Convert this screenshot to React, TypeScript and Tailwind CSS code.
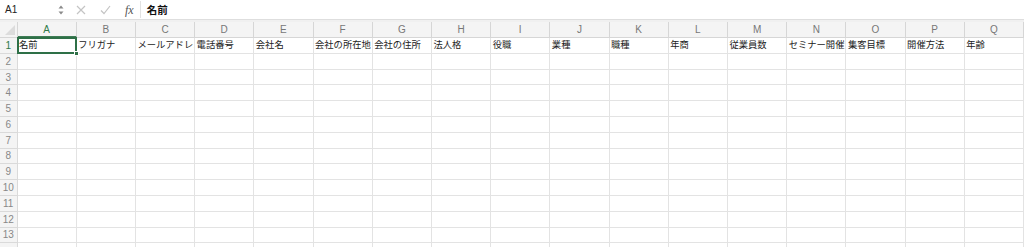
import React from "react";

const cols = ["A","B","C","D","E","F","G","H","I","J","K","L","M","N","O","P","Q"];
const row1 = ["名前","フリガナ","メールアドレス","電話番号","会社名","会社の所在地","会社の住所","法人格","役職","業種","職種","年商","従業員数","セミナー開催","集客目標","開催方法","年齢"];
const rows = Array.from({ length: 14 }, (_, i) => i + 1);

const font = { fontFamily: '"Noto Sans CJK JP", "Noto Sans", sans-serif' };
const latin = { fontFamily: '"Liberation Sans", "Noto Sans", sans-serif' };

export default function App() {
  return (
    <div className="w-[1024px] h-[247px] overflow-hidden bg-white text-[10px]" style={font}>
      {/* formula bar */}
      <div className="flex h-[19px] items-center bg-white">
        <div className="flex w-[68px] items-center justify-between pl-[5px] pr-[4px] text-[10px] text-[#222]" style={latin}>
          <span>A1</span>
          <svg width="6" height="12" viewBox="0 0 6 12">
            <path d="M0.5 4.5 L3 1.5 L5.5 4.5 Z" fill="#8a8a8a" />
            <path d="M0.5 7.5 L3 10.5 L5.5 7.5 Z" fill="#8a8a8a" />
          </svg>
        </div>
        <div className="ml-[8px] flex items-center gap-[14px]">
          <svg width="10" height="10" viewBox="0 0 10 10">
            <path d="M1 1 L9 9 M9 1 L1 9" stroke="#c4c4c4" strokeWidth="1.2" />
          </svg>
          <svg width="11" height="10" viewBox="0 0 11 10">
            <path d="M1 5.5 L4 8.5 L10 1" stroke="#c4c4c4" strokeWidth="1.2" fill="none" />
          </svg>
          <span className="text-[12px] italic text-[#555]" style={{ fontFamily: '"Liberation Serif", serif' }}>fx</span>
        </div>
        <div className="ml-[6px] flex h-[17px] flex-1 items-center border-l border-[#e2e2e2] pl-[6px] text-[10.5px] font-semibold text-[#111]">
          名前
        </div>
      </div>
      {/* separator */}
      <div className="h-[3px] border-t border-[#dedede] bg-[#f0f0f0]" />
      {/* grid */}
      <div className="grid grid-cols-[17.5px_repeat(17,minmax(0,1fr))]">
        {/* header row */}
        <div className="relative h-[16px] border-b border-r border-[#d6d6d6] bg-[#f4f4f4]">
          <svg className="absolute right-[2px] bottom-[2px]" width="10" height="10" viewBox="0 0 10 10">
            <path d="M10 0 L10 10 L0 10 Z" fill="#dcdcdc" />
          </svg>
        </div>
        {cols.map((c, i) => (
          <div
            key={c}
            className={`flex h-[16px] items-center justify-center border-r bg-[#f4f4f4] text-[10px] ${
              i === 0 ? "border-b-2 border-b-[#3f7d56] border-r-[#d6d6d6] text-[#2f7a4a]" : "border-b border-[#d6d6d6] text-[#777]"
            }`}
            style={latin}
          >
            {c}
          </div>
        ))}
        {rows.map((r) => (
          <React.Fragment key={r}>
            <div
              className={`flex h-[15.8px] items-center justify-center border-b border-r border-[#dadada] bg-[#f4f4f4] text-[10px] ${
                r === 1 ? "text-[#2f7a4a]" : "text-[#888]"
              }`}
              style={latin}
            >
              {r < 14 ? r : ""}
            </div>
            {cols.map((c, i) => (
              <div
                key={c}
                className="relative h-[15.8px] border-b border-r border-[#e3e3e3] text-[9.3px] text-[#222]"
              >
                {r === 1 && (
                  <div className="flex h-full items-center overflow-hidden whitespace-nowrap pl-[1.5px]">
                    {row1[i]}
                  </div>
                )}
                {r === 1 && i === 0 && (
                  <>
                    <div className="absolute -left-[1px] -top-[1px] z-[2] h-[calc(100%+2px)] w-[calc(100%+2px)] border-2 border-[#2e7047]" />
                    <div className="absolute -bottom-[3px] -right-[3px] z-[3] h-[5px] w-[5px] border border-white bg-[#2e7047]" />
                  </>
                )}
              </div>
            ))}
          </React.Fragment>
        ))}
      </div>
    </div>
  );
}
